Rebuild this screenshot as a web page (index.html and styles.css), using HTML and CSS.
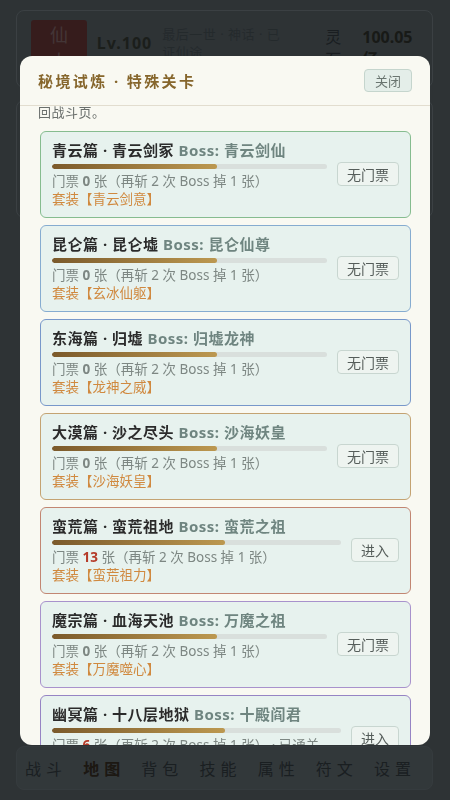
FILE: index.html
```html
<!DOCTYPE html>
<html lang="zh-CN">
  <head>
    <meta name="viewport" content="width=device-width" />
    <title>秘境试炼</title>
    <link rel="stylesheet" href="styles.css">
  </head>
  <body>
    <div class="app">
      <header class="top-panel">
        <div class="avatar">仙人</div>
        <div class="level">Lv.100</div>
        <div class="title-desc">最后一世 · 神话 · 已证仙途</div>
        <div class="stone-label">灵石</div>
        <div class="stone-value">100.05亿</div>
      </header>
      <section class="main-panel"></section>
      <div class="spacer"></div>
      <nav class="tabbar">
        <span>战斗</span>
        <span class="active">地图</span>
        <span>背包</span>
        <span>技能</span>
        <span>属性</span>
        <span>符文</span>
        <span>设置</span>
      </nav>
    </div>

    <div class="mask"></div>

    <div class="modal">
      <div class="modal-head">
        <h2>秘境试炼 · 特殊关卡</h2>
        <button class="close-btn">关闭</button>
      </div>
      <div class="modal-body">
        <p class="intro">击败各秘境 Boss 可获得门票，门票用完后需返<br>回战斗页。</p>

        <div class="stage c-green">
          <div class="stage-info">
            <div class="stage-name">青云篇 · 青云剑冢 <span class="boss">Boss: 青云剑仙</span></div>
            <div class="bar"><div class="fill" style="width: 60%"></div></div>
            <div class="ticket">门票 <b>0</b> 张（再斩 2 次 Boss 掉 1 张）</div>
            <div class="set">套装【青云剑意】</div>
          </div>
          <button class="btn">无门票</button>
        </div>

        <div class="stage c-sky">
          <div class="stage-info">
            <div class="stage-name">昆仑篇 · 昆仑墟 <span class="boss">Boss: 昆仑仙尊</span></div>
            <div class="bar"><div class="fill" style="width: 60%"></div></div>
            <div class="ticket">门票 <b>0</b> 张（再斩 2 次 Boss 掉 1 张）</div>
            <div class="set">套装【玄冰仙躯】</div>
          </div>
          <button class="btn">无门票</button>
        </div>

        <div class="stage c-blue">
          <div class="stage-info">
            <div class="stage-name">东海篇 · 归墟 <span class="boss">Boss: 归墟龙神</span></div>
            <div class="bar"><div class="fill" style="width: 60%"></div></div>
            <div class="ticket">门票 <b>0</b> 张（再斩 2 次 Boss 掉 1 张）</div>
            <div class="set">套装【龙神之威】</div>
          </div>
          <button class="btn">无门票</button>
        </div>

        <div class="stage c-sand">
          <div class="stage-info">
            <div class="stage-name">大漠篇 · 沙之尽头 <span class="boss">Boss: 沙海妖皇</span></div>
            <div class="bar"><div class="fill" style="width: 60%"></div></div>
            <div class="ticket">门票 <b>0</b> 张（再斩 2 次 Boss 掉 1 张）</div>
            <div class="set">套装【沙海妖皇】</div>
          </div>
          <button class="btn">无门票</button>
        </div>

        <div class="stage c-red">
          <div class="stage-info">
            <div class="stage-name">蛮荒篇 · 蛮荒祖地 <span class="boss">Boss: 蛮荒之祖</span></div>
            <div class="bar"><div class="fill" style="width: 60%"></div></div>
            <div class="ticket">门票 <b class="has">13</b> 张（再斩 2 次 Boss 掉 1 张）</div>
            <div class="set">套装【蛮荒祖力】</div>
          </div>
          <button class="btn">进入</button>
        </div>

        <div class="stage c-violet">
          <div class="stage-info">
            <div class="stage-name">魔宗篇 · 血海天池 <span class="boss">Boss: 万魔之祖</span></div>
            <div class="bar"><div class="fill" style="width: 60%"></div></div>
            <div class="ticket">门票 <b>0</b> 张（再斩 2 次 Boss 掉 1 张）</div>
            <div class="set">套装【万魔噬心】</div>
          </div>
          <button class="btn">无门票</button>
        </div>

        <div class="stage c-purple">
          <div class="stage-info">
            <div class="stage-name">幽冥篇 · 十八层地狱 <span class="boss">Boss: 十殿阎君</span></div>
            <div class="bar"><div class="fill" style="width: 60%"></div></div>
            <div class="ticket">门票 <b class="has">6</b> 张（再斩 2 次 Boss 掉 1 张） · 已通关</div>
            <div class="set">套装【阎罗判命】</div>
          </div>
          <button class="btn">进入</button>
        </div>
      </div>
    </div>
  </body>
</html>
```

FILE: styles.css
```css
* {
  box-sizing: border-box;
}

html, body {
  margin: 0;
  height: 100%;
}

body {
  background: #8b9294;
  font-family: "Noto Sans", "Noto Sans CJK SC", sans-serif;
  overflow: hidden;
}

/* page underneath the dialog */
.app {
  height: 100vh;
  display: flex;
  flex-direction: column;
  padding: 10px 17px 10px 16px;
}

.top-panel {
  display: flex;
  align-items: flex-start;
  gap: 10px;
  height: 78px;
  padding: 9px 13px 9px 14px;
  border: 1px solid #b9c2c4;
  border-radius: 8px;
}

.avatar {
  width: 57px;
  height: 58px;
  padding: 2px 18px 0;
  background: #a8423c;
  border-radius: 3px;
  color: #d89a98;
  font-size: 18px;
  line-height: 26px;
  text-align: center;
}

.level {
  margin-top: 12px;
  color: #4a4a38;
  font-size: 16px;
  font-weight: 700;
  letter-spacing: 1px;
}

.title-desc {
  width: 128px;
  margin-top: 5px;
  color: #6a7375;
  font-size: 13px;
  line-height: 18px;
  letter-spacing: 0.5px;
}

.stone-label {
  width: 20px;
  margin: 6px 0 0 32px;
  color: #444a4c;
  font-size: 16px;
  line-height: 22px;
}

.stone-value {
  width: 60px;
  margin: 6px 0 0 8px;
  color: #3e3a28;
  font-size: 16px;
  font-weight: 700;
  line-height: 22px;
}

.main-panel {
  height: 118px;
  margin-top: 12px;
  border: 1px solid #b9c2c4;
  border-radius: 8px;
}

.spacer {
  flex: 1;
}

.tabbar {
  display: grid;
  grid-template-columns: repeat(7, 1fr);
  align-items: center;
  height: 44px;
  padding-right: 8px;
  background: #9ba4a6;
  border: 1px solid #a7b0b2;
  border-radius: 8px;
  color: #464c4e;
  font-size: 16px;
  letter-spacing: 5px;
  text-align: center;
}

.tabbar .active {
  color: #4b3217;
  font-weight: 700;
}

/* dimmer + dialog */
.mask {
  position: fixed;
  inset: 0;
  background: rgba(10, 14, 16, 0.72);
}

.modal {
  position: fixed;
  top: 56px;
  left: 20px;
  right: 20px;
  bottom: 55px;
  display: flex;
  flex-direction: column;
  background: #f9f9f2;
  border-radius: 12px;
  overflow: hidden;
}

.modal-head {
  display: flex;
  align-items: center;
  justify-content: space-between;
  height: 50px;
  padding: 0 18px;
  border-bottom: 1px solid #e2ddcf;
}

.modal-head h2 {
  margin: 0;
  color: #86662c;
  font-size: 15px;
  font-weight: 700;
  letter-spacing: 2.4px;
}

.close-btn {
  width: 48px;
  height: 23px;
  padding: 0;
  background: #e4eee9;
  border: 1px solid #c5d5cd;
  border-radius: 4px;
  color: #6a7570;
  font-family: inherit;
  font-size: 13px;
}

.modal-body {
  flex: 1;
  overflow: hidden;
  padding: 0 19px 0 20px;
}

.intro {
  margin: -21px 0 10px -2px;
  color: #6a6f6c;
  font-size: 13px;
  line-height: 18px;
  letter-spacing: 0.5px;
}

.stage {
  display: flex;
  align-items: center;
  gap: 10px;
  height: 87px;
  margin-bottom: 7px;
  padding: 8px 11px 9px;
  background: #e7f2ee;
  border: 1.5px solid #8cbf95;
  border-radius: 6px;
}

.c-green { border-color: #86bc8f; }
.c-sky { border-color: #86acd0; }
.c-blue { border-color: #7898ca; }
.c-sand { border-color: #c4a372; }
.c-red { border-color: #c28672; }
.c-violet { border-color: #a892cc; }
.c-purple { border-color: #9684c4; }

.stage-info {
  flex: 1;
  min-width: 0;
}

.stage-name {
  color: #2b2b2b;
  font-size: 15px;
  font-weight: 700;
  line-height: 19px;
  letter-spacing: 0.5px;
  white-space: nowrap;
}

.boss {
  color: #6f8580;
}

.bar {
  height: 5px;
  margin: 4px 0 3px;
  background: #d9dfdc;
  border-radius: 3px;
  overflow: hidden;
}

.fill {
  height: 100%;
  background: linear-gradient(90deg, #7b5a2b, #bc9850);
  border-radius: 3px;
}

.ticket {
  color: #7d8783;
  font-size: 13.5px;
  line-height: 18px;
  white-space: nowrap;
}

.ticket b {
  font-weight: 700;
}

.ticket .has {
  color: #b53a28;
}

.set {
  color: #d0893f;
  font-size: 13.5px;
  line-height: 18px;
}

.btn {
  flex: none;
  height: 24px;
  padding: 0 9px;
  background: #eef4f0;
  border: 1px solid #c8d6d0;
  border-radius: 4px;
  color: #555d5a;
  font-family: inherit;
  font-size: 14px;
}
```
